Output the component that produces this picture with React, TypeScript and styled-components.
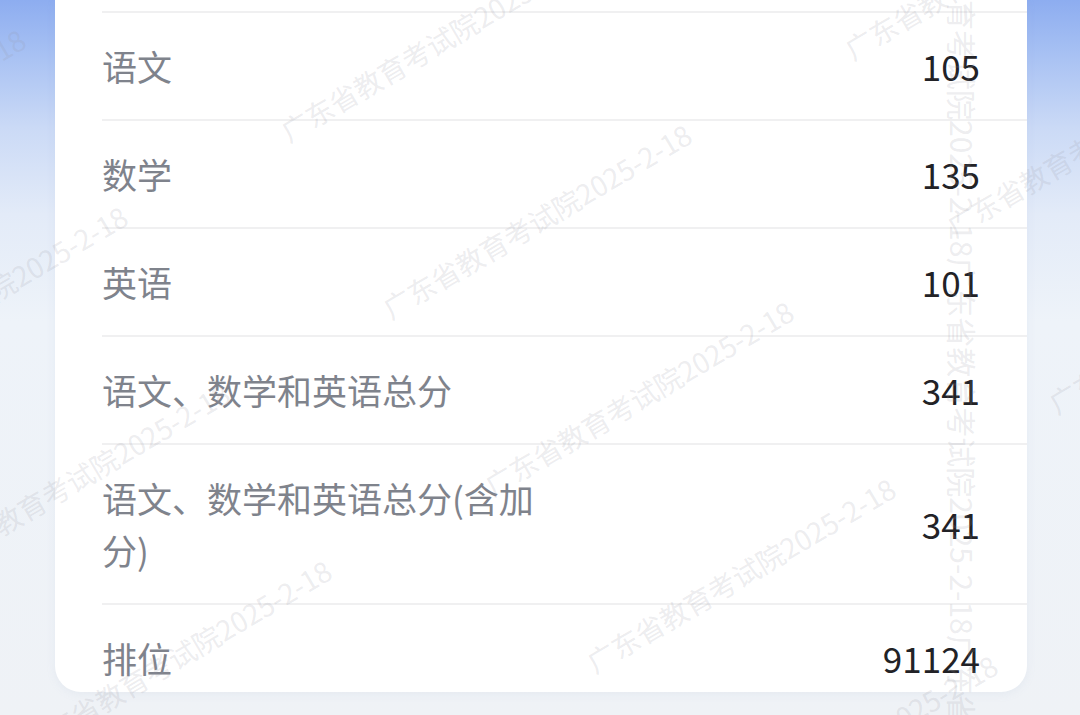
import React from "react";
import styled, { createGlobalStyle } from "styled-components";

const GlobalStyle = createGlobalStyle`
  html, body {
    margin: 0;
    padding: 0;
    width: 1080px;
    height: 715px;
    overflow: hidden;
    font-family: "Noto Sans CJK SC", "Noto Sans", sans-serif;
  }
`;

const Page = styled.div`
  position: relative;
  box-sizing: border-box;
  width: 1080px;
  height: 715px;
  padding: 0 53px 0 55px;
  overflow: hidden;
  background: linear-gradient(
    180deg,
    #8dadf0 0%,
    #a9c2f3 8%,
    #cbdaf6 18%,
    #e3ebf8 30%,
    #eef3f9 45%,
    #eff2f6 100%
  );
`;

const Card = styled.div`
  background: #ffffff;
  border-radius: 0 0 26px 26px;
  padding-top: 11px;
  box-shadow: 0 2px 10px rgba(150, 170, 200, 0.1);
`;

const Row = styled.div`
  display: flex;
  justify-content: space-between;
  align-items: center;
  margin-left: 47px;
  padding: 27px 47px 27px 0;
  border-top: 2px solid #f0f0f1;

  &:last-child {
    padding-bottom: 8px;
  }
`;

const Label = styled.div`
  flex: 0 1 456px;
  font-size: 35px;
  line-height: 52px;
  color: #7f838c;
`;

const Value = styled.div`
  font-size: 35px;
  line-height: 52px;
  color: #222226;
  white-space: nowrap;
`;

const Overlay = styled.div`
  position: absolute;
  inset: 0;
  pointer-events: none;
  overflow: hidden;
`;

const Mark = styled.div`
  position: absolute;
  white-space: nowrap;
  font-size: 28px;
  line-height: 28px;
  color: rgba(150, 150, 160, 0.18);
  transform-origin: 0 100%;
  transform: rotate(-30.5deg);
`;

const VerticalMark = styled.div`
  position: absolute;
  white-space: nowrap;
  font-size: 30px;
  line-height: 30px;
  color: rgba(150, 150, 160, 0.18);
  transform-origin: 0 0;
  transform: rotate(90deg);
`;

const WM = "广东省教育考试院2025-2-18";

const rows: { label: string; value: string }[] = [
  { label: "语文", value: "105" },
  { label: "数学", value: "135" },
  { label: "英语", value: "101" },
  { label: "语文、数学和英语总分", value: "341" },
  { label: "语文、数学和英语总分(含加分)", value: "341" },
  { label: "排位", value: "91124" },
];

const marks: { x: number; y: number }[] = [];
for (let i = -3; i <= 5; i++) {
  for (let j = -1; j <= 2; j++) {
    const x = 290 + i * 102 + j * 564;
    const y = 145 + i * 177 - j * 82;
    if (x > -400 && x < 1080 && y > -40 && y < 900) marks.push({ x, y });
  }
}

export default function App() {
  return (
    <>
      <GlobalStyle />
      <Page>
        <Card>
          {rows.map((r, idx) => (
            <Row key={idx}>
              <Label>{r.label}</Label>
              <Value>{r.value}</Value>
            </Row>
          ))}
        </Card>
        <Overlay>
          {marks.map((m, idx) => (
            <Mark key={idx} style={{ left: m.x, top: m.y - 28 }}>
              {WM}
            </Mark>
          ))}
          <VerticalMark style={{ left: 978, top: -120 }}>
            {WM + WM + WM + WM}
          </VerticalMark>
        </Overlay>
      </Page>
    </>
  );
}
